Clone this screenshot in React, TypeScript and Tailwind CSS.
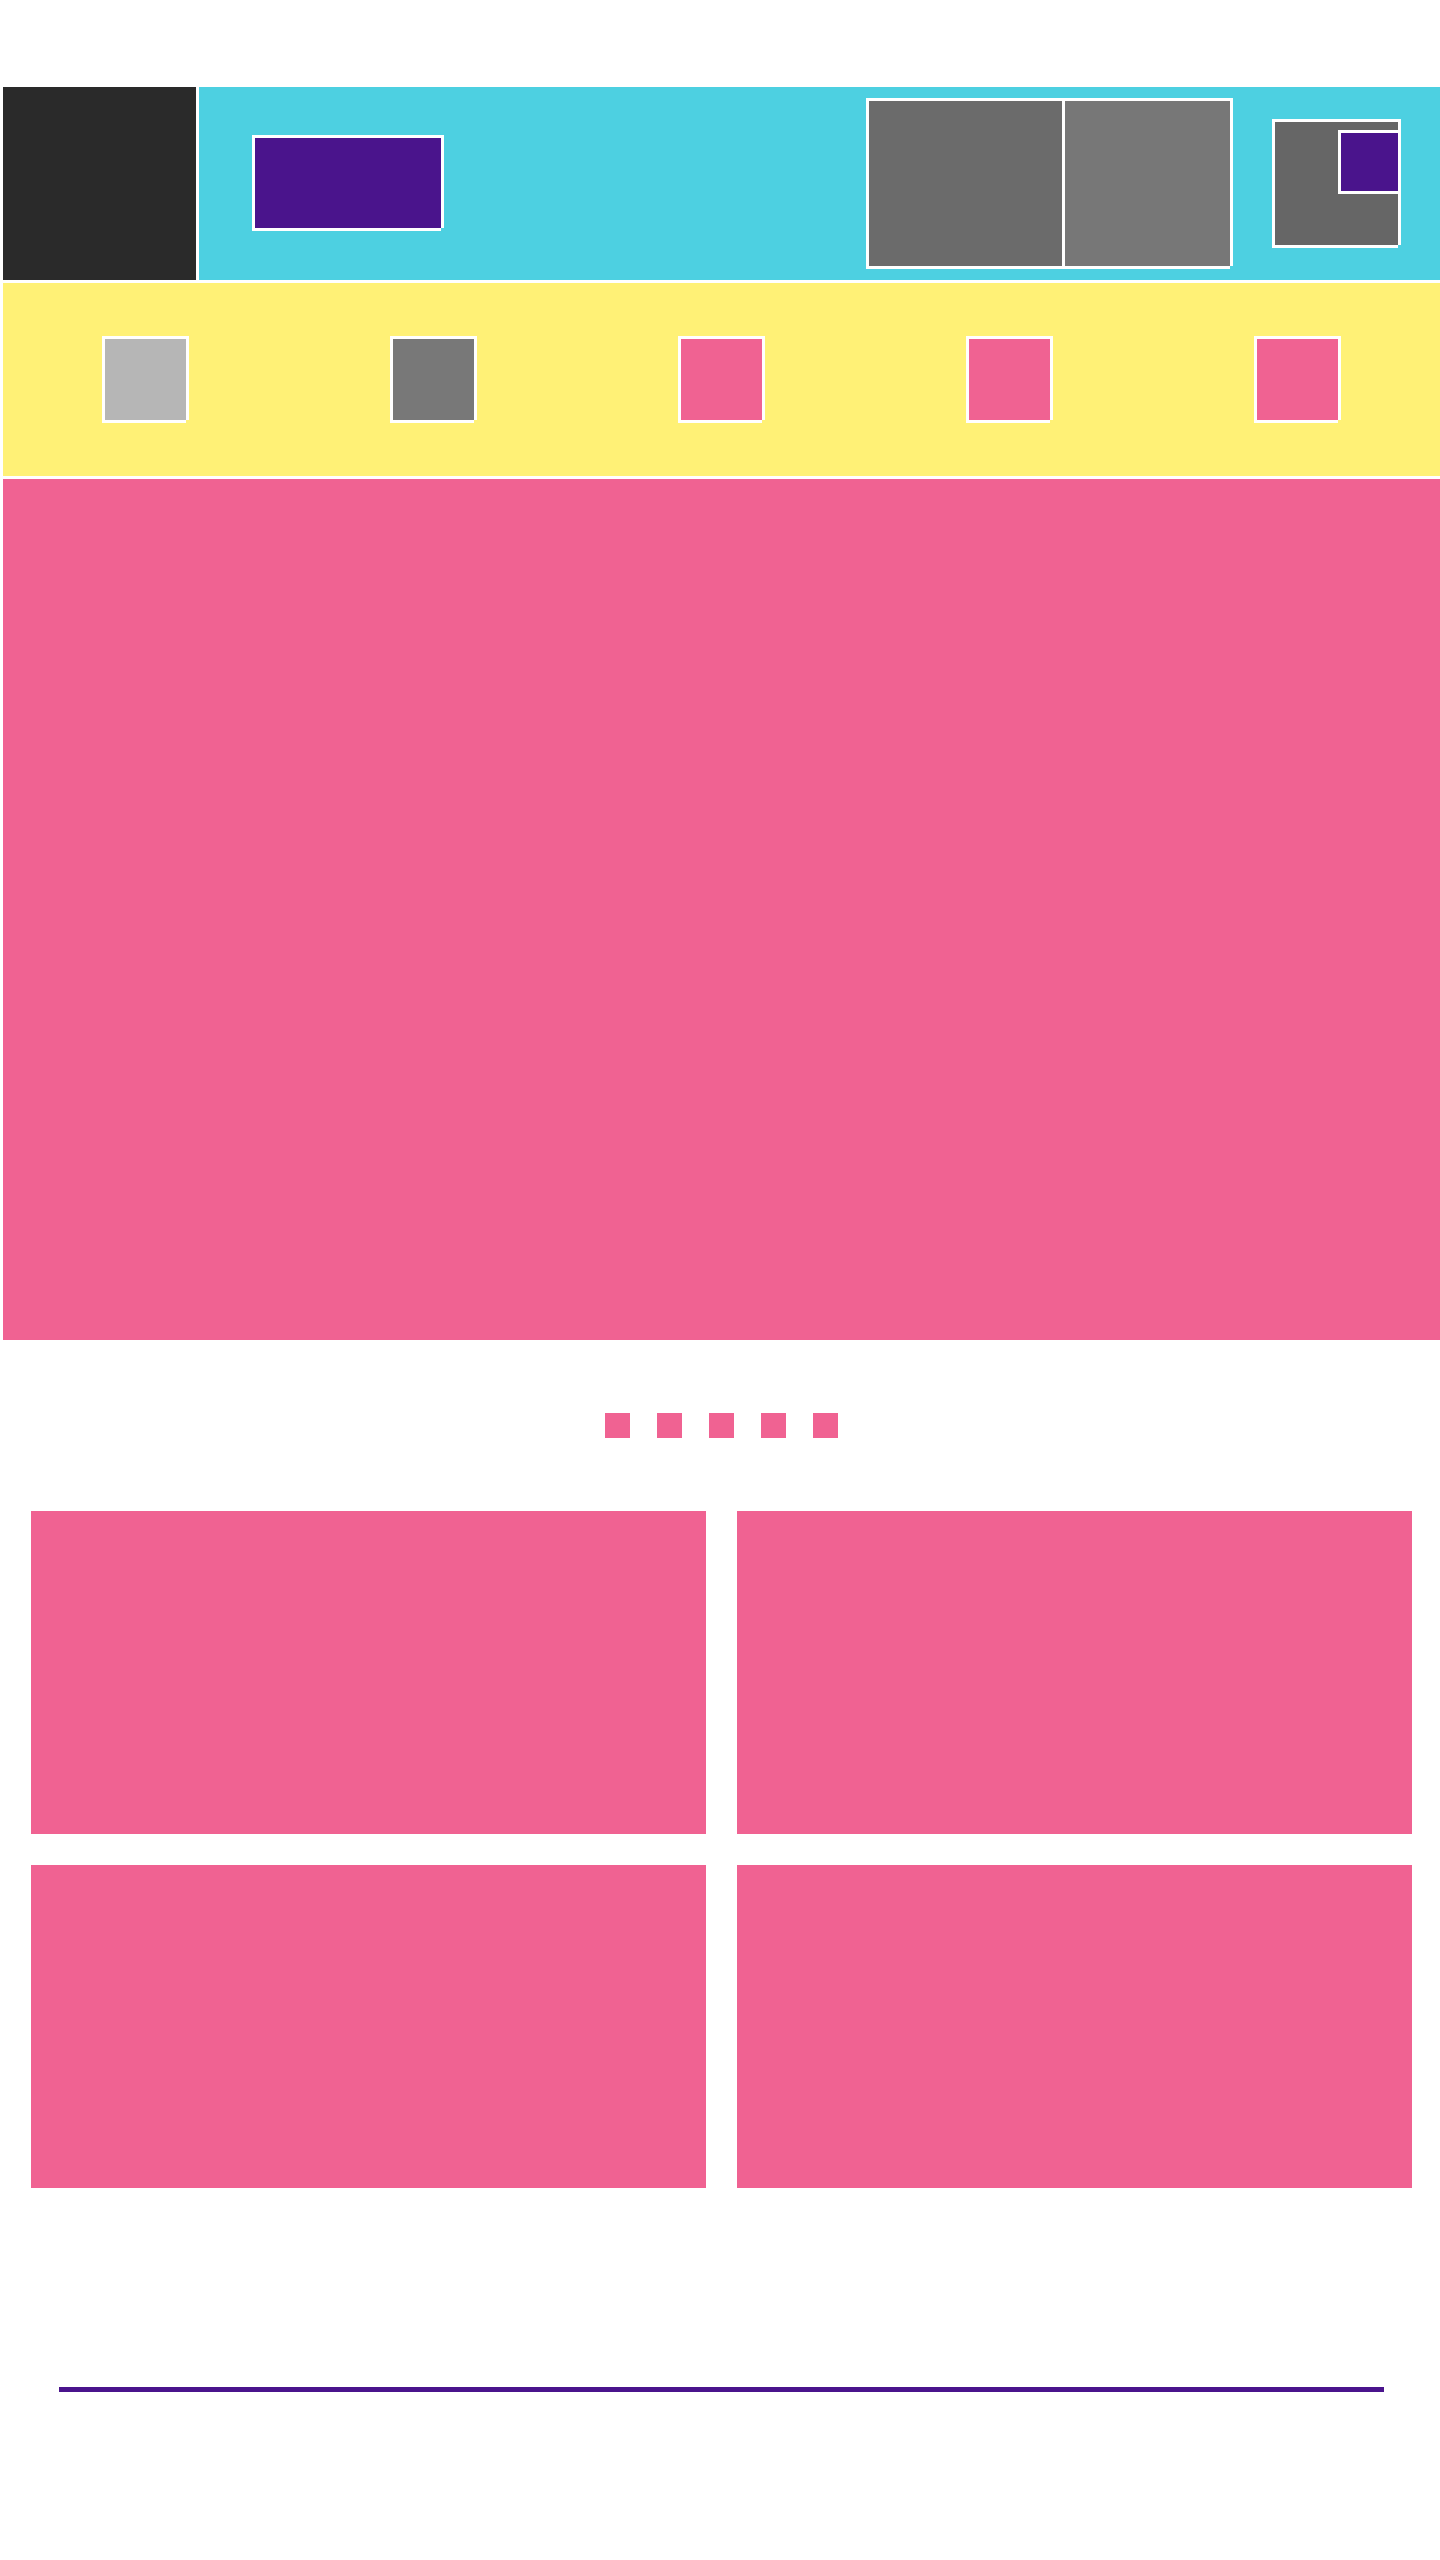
import React from "react";

const frame =
  "border-l-[3px] border-t-[3px] border-white shadow-[3px_0_0_#ffffff,0_3px_0_#ffffff]";

export default function App() {
  const tiles = ["bg-[#b6b6b6]", "bg-[#787878]", "bg-[#f06292]", "bg-[#f06292]", "bg-[#f06292]"];
  return (
    <div
      className="min-h-[2560px] w-full bg-white pl-[3px] pt-[87px]"
      style={{ fontFamily: '"Liberation Sans", Arial, sans-serif' }}
    >
      {/* Header */}
      <header className="flex h-[193px] gap-[3px]">
        <div className="w-[193px] bg-[#2a2a2a]" />
        <div className="flex flex-1 items-start bg-[#4dd0e1] pl-[53px] pr-[42px]">
          <div className={`mt-[48px] h-[93px] w-[189px] bg-[#4a148c] ${frame}`} />
          <div className={`ml-auto mt-[11px] flex h-[168px] w-[364px] ${frame}`}>
            <div className="w-[193px] bg-[#6b6b6b]" />
            <div className="flex-1 border-l-[3px] border-white bg-[#777777]" />
          </div>
          <div className={`relative ml-[42px] mt-[32px] h-[126px] w-[126px] bg-[#666666] ${frame}`}>
            <div className={`absolute right-0 top-2 h-[61px] w-[60px] bg-[#4a148c] ${frame}`} />
          </div>
        </div>
      </header>

      {/* Category strip */}
      <section className="mt-[3px] flex h-[193px] items-start gap-[204px] bg-[#fff176] pl-[99px] pt-[53px]">
        {tiles.map((c, i) => (
          <div key={i} className={`h-[84px] w-[84px] ${c} ${frame}`} />
        ))}
      </section>

      {/* Hero */}
      <section className="mt-[3px] h-[861px] bg-[#f06292]" />

      {/* Pager dots */}
      <div className="flex justify-center gap-[27px] pt-[73px]">
        {[0, 1, 2, 3, 4].map((i) => (
          <div key={i} className="h-[25px] w-[25px] bg-[#f06292]" />
        ))}
      </div>

      {/* Cards */}
      <div className="grid grid-cols-2 gap-[31px] px-[28px] pt-[73px]">
        {[0, 1, 2, 3].map((i) => (
          <div key={i} className="h-[323px] bg-[#f06292]" />
        ))}
      </div>

      {/* Footer rule */}
      <div className="px-[56px] pt-[199px]">
        <div className="h-[5px] bg-[#4a148c]" />
      </div>
    </div>
  );
}
